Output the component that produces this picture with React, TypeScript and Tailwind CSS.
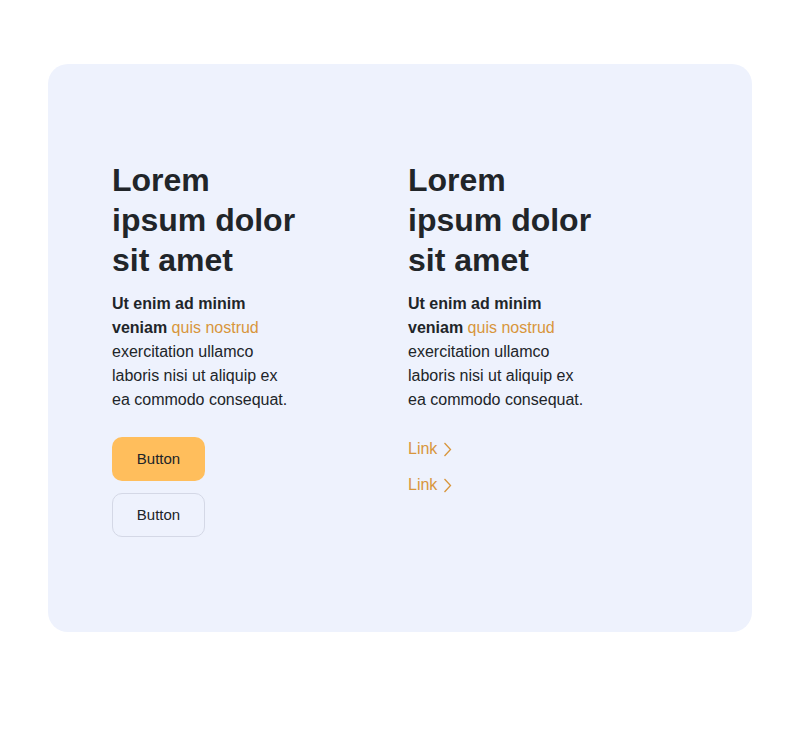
const font = { fontFamily: '"Liberation Sans", Arial, sans-serif' };

function Copy() {
  return (
    <>
      <h2 className="text-[32px] leading-[40px] font-bold text-[#212529]">
        Lorem ipsum dolor sit amet
      </h2>
      <p className="mt-3 text-base leading-6 text-[#212529]">
        <strong className="font-bold">Ut enim ad minim veniam</strong>{' '}
        <a className="text-[#d8963c]">quis nostrud</a> exercitation ullamco laboris nisi ut aliquip
        ex ea commodo consequat.
      </p>
    </>
  );
}

function LinkItem() {
  return (
    <a className="flex items-center gap-[6px] text-base leading-6 text-[#d8963c]">
      Link
      <svg width="9" height="15" viewBox="0 0 9 15" fill="none" stroke="currentColor" strokeWidth="1.3">
        <polyline points="1.5,1 7.5,7.5 1.5,14" />
      </svg>
    </a>
  );
}

export default function App() {
  return (
    <div className="min-h-screen bg-white px-12 py-16" style={font}>
      <div className="rounded-[20px] bg-[#eef2fd] px-16 pt-24 pb-[95px]">
        <div className="flex gap-[110px]">
          <div className="w-[186px]">
            <Copy />
            <div className="mt-[25px] flex flex-col items-start gap-3">
              <button className="h-11 w-[93px] rounded-[10px] bg-[#ffbe5c] text-[15px] text-[#212529]">
                Button
              </button>
              <button className="h-11 w-[93px] rounded-[10px] border border-[#d4d8e6] text-[15px] text-[#212529]">
                Button
              </button>
            </div>
          </div>
          <div className="w-[186px]">
            <Copy />
            <div className="mt-[25px] flex flex-col items-start gap-3">
              <LinkItem />
              <LinkItem />
            </div>
          </div>
        </div>
      </div>
    </div>
  );
}
